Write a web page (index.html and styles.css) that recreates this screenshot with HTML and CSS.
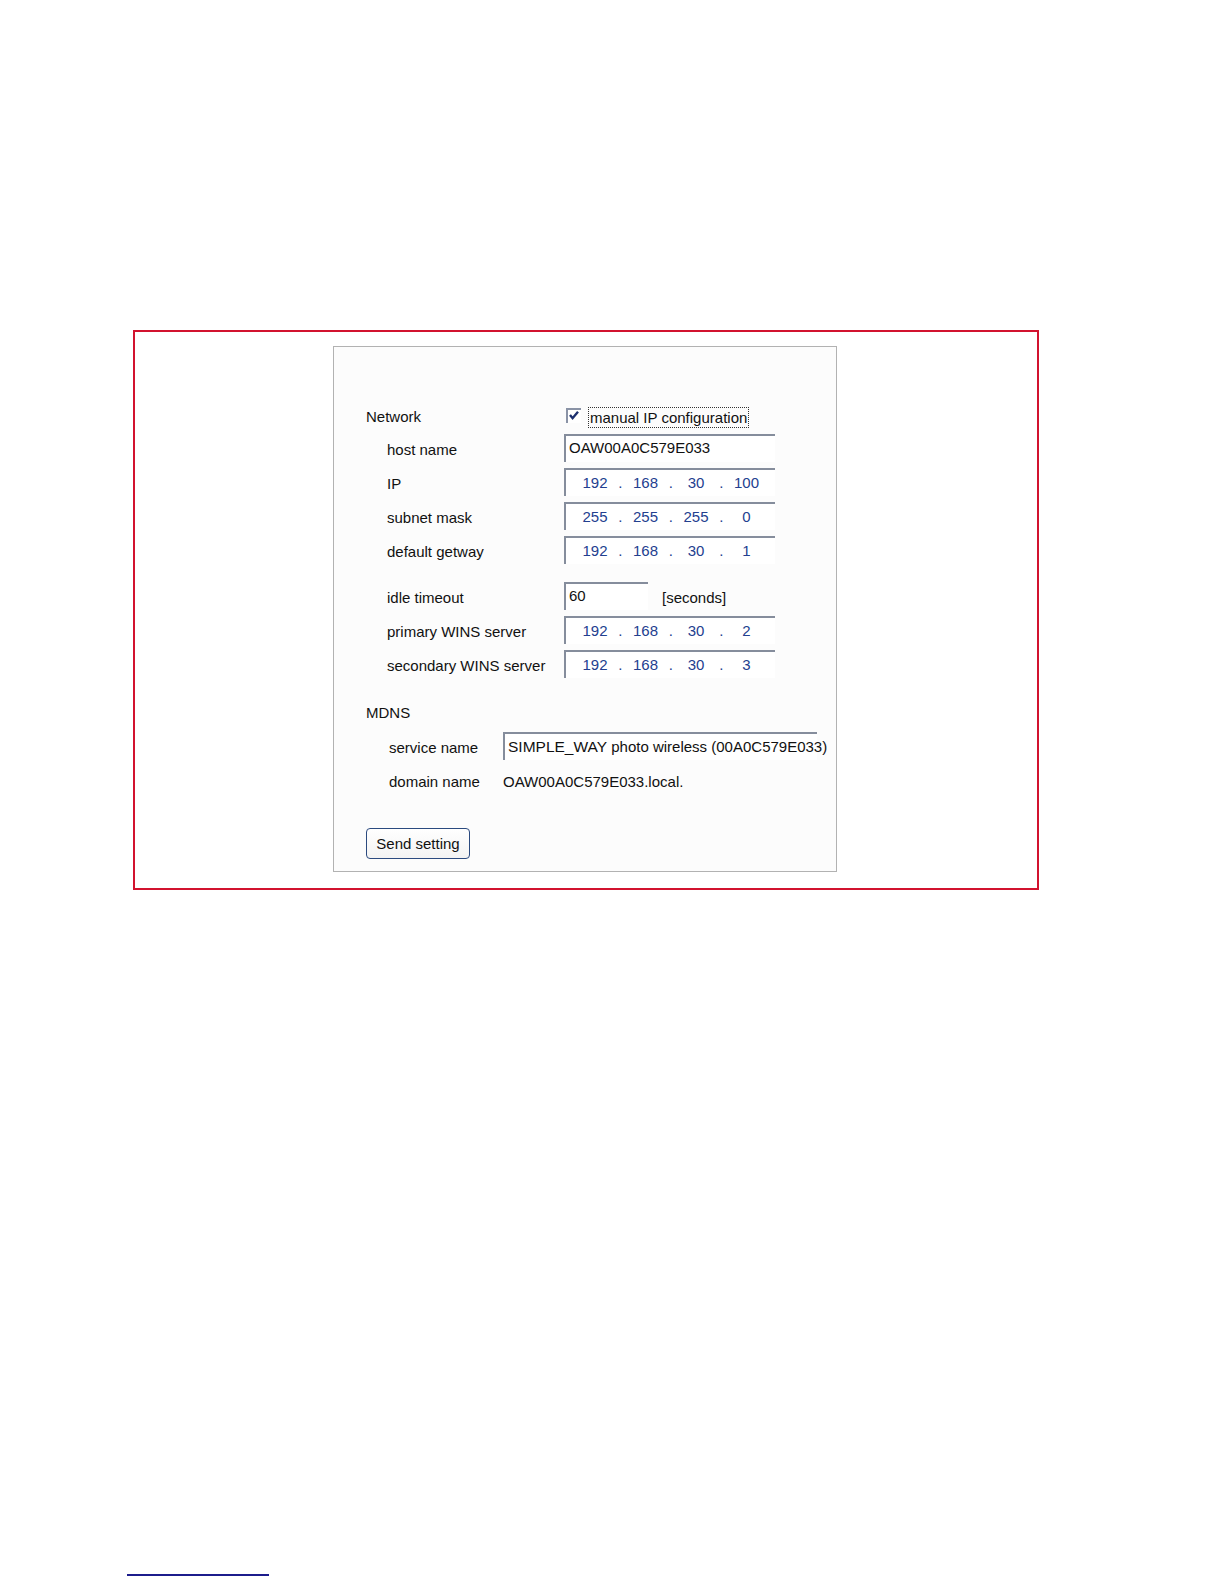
FILE: index.html
```html
<!DOCTYPE html>
<html>
<head>
<meta charset="utf-8">
<title>Network settings</title>
<link rel="stylesheet" href="styles.css">
</head>
<body>
<div class="frame">
  <div class="panel">
    <div class="row head">
      <div class="lbl-h">Network</div>
      <div class="check">
        <svg class="cb" width="15" height="15" viewBox="0 0 15 15">
          <rect x="0" y="0" width="15" height="15" fill="#ffffff"/>
          <path d="M1 15 V1 H15" fill="none" stroke="#8a93a6" stroke-width="2"/>
          <path d="M4 7 L6.6 10.2 L12 3.8" fill="none" stroke="#1c2f6e" stroke-width="2.4"/>
        </svg>
        <span class="focus">manual IP configuration</span>
      </div>
    </div>

    <div class="row field">
      <div class="lbl">host name</div>
      <div class="box wide text">OAW00A0C579E033</div>
    </div>
    <div class="row field">
      <div class="lbl">IP</div>
      <div class="box wide ip"><span>192</span><span>.</span><span>168</span><span>.</span><span>30</span><span>.</span><span>100</span></div>
    </div>
    <div class="row field">
      <div class="lbl">subnet mask</div>
      <div class="box wide ip"><span>255</span><span>.</span><span>255</span><span>.</span><span>255</span><span>.</span><span>0</span></div>
    </div>
    <div class="row field">
      <div class="lbl">default getway</div>
      <div class="box wide ip"><span>192</span><span>.</span><span>168</span><span>.</span><span>30</span><span>.</span><span>1</span></div>
    </div>

    <div class="row field gap">
      <div class="lbl">idle timeout</div>
      <div class="box short text">60</div>
      <div class="unit">[seconds]</div>
    </div>
    <div class="row field">
      <div class="lbl">primary WINS server</div>
      <div class="box wide ip"><span>192</span><span>.</span><span>168</span><span>.</span><span>30</span><span>.</span><span>2</span></div>
    </div>
    <div class="row field">
      <div class="lbl">secondary WINS server</div>
      <div class="box wide ip"><span>192</span><span>.</span><span>168</span><span>.</span><span>30</span><span>.</span><span>3</span></div>
    </div>

    <div class="row head mdns">
      <div class="lbl-h">MDNS</div>
    </div>
    <div class="row field svc">
      <div class="lbl lbl-m">service name</div>
      <div class="box svcbox text"><span class="big">SIMPLE_WAY</span> photo wireless (00A0C579E033)</div>
    </div>
    <div class="row plain">
      <div class="lbl lbl-m">domain name</div>
      <div class="val">OAW00A0C579E033.local.</div>
    </div>

    <div class="btnrow">
      <button class="btn" type="button">Send setting</button>
    </div>
  </div>
</div>
<div class="footline"></div>
</body>
</html>
```

FILE: styles.css
```css
html, body {
  margin: 0;
  padding: 0;
  background: #ffffff;
}

body {
  font-family: "Liberation Sans", Arial, sans-serif;
  font-size: 15px;
  color: #111111;
  padding-top: 330px;
  padding-left: 133px;
}

.frame {
  box-sizing: border-box;
  width: 906px;
  border: 2px solid #d2132f;
  padding: 14px 0 16px 198px;
}

.panel {
  box-sizing: border-box;
  width: 504px;
  border: 1px solid #b2b2b2;
  background: #fcfcfc;
  padding: 57px 0 12px 32px;
}

.row {
  display: flex;
  align-items: flex-start;
}

.head {
  height: 24px;
  line-height: 24px;
  margin-bottom: 6px;
  align-items: center;
}

.lbl-h {
  width: 198px;
  flex: none;
  padding-top: 2px;
}

.check {
  display: flex;
  align-items: center;
  gap: 7px;
  margin-left: 2px;
}

.cb {
  display: block;
  flex: none;
  margin-top: -1px;
}

.focus {
  display: block;
  border: 1px dotted #333333;
  height: 19px;
  line-height: 20px;
  padding: 0 1px;
  white-space: nowrap;
  margin-top: 2px;
}

.field {
  height: 34px;
}

.gap {
  margin-top: 12px;
}

.lbl {
  box-sizing: border-box;
  width: 198px;
  flex: none;
  padding-left: 21px;
  line-height: 32px;
  white-space: nowrap;
}

.box {
  box-sizing: border-box;
  height: 28px;
  border-top: 2px solid #858d9c;
  border-left: 2px solid #858d9c;
  background: #ffffff;
  line-height: 24px;
  white-space: nowrap;
}

.wide {
  width: 211px;
}

.short {
  width: 84px;
}

.text {
  padding-left: 3px;
}

.ip {
  display: grid;
  grid-template-columns: 36px 14.5px 36px 14.5px 36px 14.5px 36px;
  padding-left: 11px;
  color: #23408f;
  line-height: 26px;
}

.ip span {
  text-align: center;
}

.unit {
  margin-left: 14px;
  line-height: 32px;
}

.mdns {
  margin-top: 16px;
  margin-bottom: 8px;
}

.lbl-m {
  width: 137px;
  padding-left: 23px;
}

.svcbox {
  width: 314px;
  overflow: visible;
  line-height: 26px;
}

.big {
  font-size: 15.5px;
}

.plain {
  height: 30px;
}

.val {
  line-height: 32px;
  white-space: nowrap;
}

.btnrow {
  margin-top: 32px;
}

.btn {
  display: block;
  width: 104px;
  height: 31px;
  border: 1px solid #2b4a7f;
  border-radius: 4px;
  background: linear-gradient(#ffffff, #f3f3f3);
  font-family: "Liberation Sans", Arial, sans-serif;
  font-size: 15px;
  color: #111111;
  padding: 0;
}

.footline {
  margin-top: 684px;
  margin-left: -6px;
  width: 142px;
  height: 2px;
  background: #1c1c8c;
}
```
